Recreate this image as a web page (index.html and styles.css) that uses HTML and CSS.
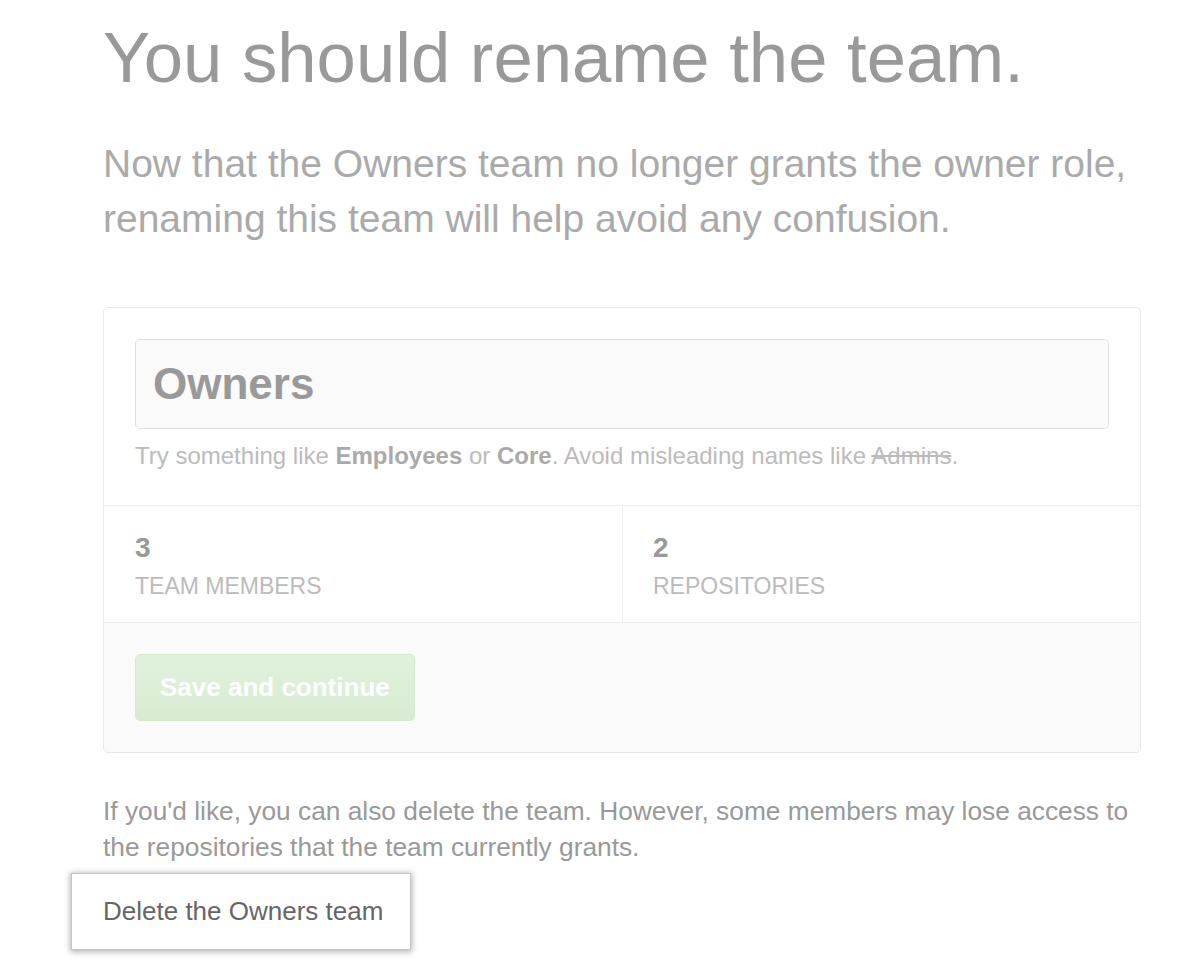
FILE: index.html
```html
<!DOCTYPE html>
<html>
<head>
<meta charset="utf-8">
<link rel="stylesheet" href="styles.css">
</head>
<body>
<main class="page">
  <h1 class="title">You should rename the team.</h1>
  <p class="lead">Now that the Owners team no longer grants the owner role, renaming this team will help avoid any confusion.</p>

  <section class="box">
    <div class="box-body">
      <div class="name-input">Owners</div>
      <p class="hint">Try something like <strong>Employees</strong> or <strong>Core</strong>. Avoid misleading names like <del>Admins</del>.</p>
    </div>
    <div class="stats">
      <div class="stat">
        <div class="stat-num">3</div>
        <div class="stat-label">TEAM MEMBERS</div>
      </div>
      <div class="stat">
        <div class="stat-num">2</div>
        <div class="stat-label">REPOSITORIES</div>
      </div>
    </div>
    <div class="box-footer">
      <button class="btn-save" type="button">Save and continue</button>
    </div>
  </section>

  <p class="note">If you'd like, you can also delete the team. However, some members may lose access to the repositories that the team currently grants.</p>
  <div class="delete-wrap">
    <button class="btn-delete" type="button">Delete the Owners team</button>
  </div>
</main>
</body>
</html>
```

FILE: styles.css
```css
html, body {
  margin: 0;
  padding: 0;
  background: #ffffff;
}

body {
  font-family: "Liberation Sans", Arial, Helvetica, sans-serif;
}

.page {
  width: 1038px;
  padding-left: 103px;
  padding-bottom: 20px;
}

.title {
  margin: 23px 0 0;
  font-size: 70.7px;
  line-height: 70px;
  font-weight: normal;
  color: #999999;
}

.lead {
  margin: 43px 0 0;
  font-size: 39px;
  line-height: 55px;
  color: #aaaaaa;
}

.box {
  margin-top: 61px;
  border: 1px solid #e8e8e8;
  border-radius: 5px;
  overflow: hidden;
}

.box-body {
  padding: 31px;
}

.name-input {
  height: 88px;
  box-sizing: content-box;
  border: 1px solid #e0e0e0;
  border-radius: 5px;
  background: #fafafa;
  padding: 0 17px;
  display: flex;
  align-items: center;
  font-size: 44px;
  font-weight: bold;
  color: #999999;
}

.hint {
  margin: 9px 0 0;
  font-size: 24px;
  line-height: 36px;
  color: #bbbbbb;
}

.hint strong {
  color: #aaaaaa;
}

.hint del {
  color: #bbbbbb;
}

.stats {
  display: grid;
  grid-template-columns: 1fr 1fr;
  border-top: 1px solid #eeeeee;
}

.stat {
  padding: 28px 31px 21px;
}

.stat + .stat {
  border-left: 1px solid #eeeeee;
  padding-left: 30px;
}

.stat-num {
  font-size: 28px;
  line-height: 1;
  font-weight: bold;
  color: #999999;
}

.stat-label {
  margin-top: 11px;
  font-size: 23px;
  line-height: 1.2;
  color: #bbbbbb;
}

.box-footer {
  border-top: 1px solid #eeeeee;
  background: #fafafa;
  padding: 31px;
}

.btn-save {
  display: block;
  height: 67px;
  padding: 0 24px;
  border: 1px solid #d3e9cc;
  border-radius: 5px;
  background: linear-gradient(#e1f2dc, #d8ebd2);
  font-family: "Liberation Sans", Arial, Helvetica, sans-serif;
  font-size: 26px;
  font-weight: bold;
  color: #ffffff;
}

.note {
  margin: 40px 0 0;
  font-size: 26.3px;
  line-height: 36px;
  color: #999999;
}

.delete-wrap {
  margin-top: 8px;
  margin-left: -32px;
}

.btn-delete {
  display: block;
  height: 77px;
  padding: 0 27px 0 31px;
  border: 1px solid #c4c4c4;
  background: #ffffff;
  box-shadow: 0 1px 6px 1px rgba(0, 0, 0, 0.3);
  font-family: "Liberation Sans", Arial, Helvetica, sans-serif;
  font-size: 26px;
  color: #666666;
  text-align: left;
}
```
